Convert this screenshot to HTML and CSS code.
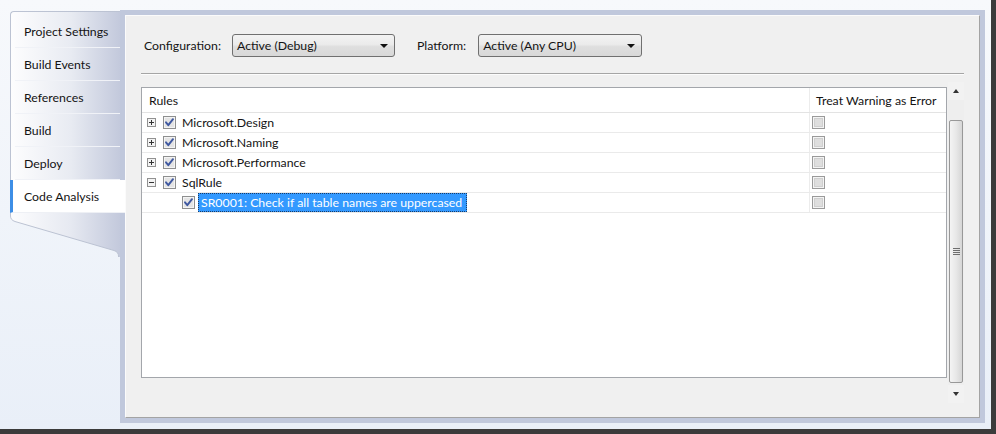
FILE: index.html
```html
<!DOCTYPE html>
<html>
<head>
<meta charset="utf-8">
<link rel="stylesheet" href="styles.css">
</head>
<body>
<svg class="defs" width="0" height="0">
  <defs>
    <linearGradient id="tailgrad" x1="0" x2="1" y1="0" y2="0">
      <stop offset="0" stop-color="#fdfdfe"/>
      <stop offset="0.55" stop-color="#e6e9f1"/>
      <stop offset="1" stop-color="#c3c9dc"/>
    </linearGradient>
    <symbol id="chk" viewBox="0 0 13 13">
      <rect x="0.5" y="0.5" width="12" height="12" fill="#f4f4f4" stroke="#8e8f8f"/>
      <rect x="1.5" y="1.5" width="10" height="10" fill="#e4e4e4" stroke="#f4f4f4"/>
      <path d="M3 6.3 L5.3 9.2 L10 3.2" fill="none" stroke="#3f58a0" stroke-width="1.9" stroke-linejoin="round" stroke-linecap="round"/>
    </symbol>
    <symbol id="unchk" viewBox="0 0 13 13">
      <rect x="0.5" y="0.5" width="12" height="12" fill="#f4f4f4" stroke="#9a9a9a"/>
      <rect x="2" y="2" width="9" height="9" fill="#dedede"/>
      <rect x="2.5" y="2.5" width="8" height="8" fill="none" stroke="#cfcfcf"/>
    </symbol>
    <symbol id="plus" viewBox="0 0 9 9">
      <rect x="0.5" y="0.5" width="8" height="8" fill="#f3f3f3" stroke="#919191"/>
      <path d="M2 4.5 H7 M4.5 2 V7" stroke="#333" stroke-width="1"/>
    </symbol>
    <symbol id="minus" viewBox="0 0 9 9">
      <rect x="0.5" y="0.5" width="8" height="8" fill="#f3f3f3" stroke="#919191"/>
      <path d="M2 4.5 H7" stroke="#333" stroke-width="1"/>
    </symbol>
  </defs>
</svg>
<div class="frame">
  <div class="window">
    <div class="side">
      <div class="tabs">
        <div class="tab">Project Settings</div>
        <div class="tab">Build Events</div>
        <div class="tab">References</div>
        <div class="tab">Build</div>
        <div class="tab">Deploy</div>
        <div class="tab active">Code Analysis</div>
      </div>
      <svg class="tail" width="110" height="44" viewBox="0 0 110 44">
        <path d="M0.5 0 V3 Q0.5 7 5 8.5 L104 37.5 Q108.5 39 108.5 43 V44 H110 V0 Z" fill="url(#tailgrad)"/>
        <path d="M0.5 0 V3 Q0.5 7 5 8.5 L104 37.5 Q108.5 39 108.5 43 V44" fill="none" stroke="#bcc3d3" stroke-width="1"/>
      </svg>
    </div>
    <div class="panel">
      <div class="inner">
        <div class="toolbar">
          <span class="label">Configuration:</span>
          <div class="combo combo-config"><span>Active (Debug)</span><i class="arrow"></i></div>
          <span class="label label-platform">Platform:</span>
          <div class="combo combo-platform"><span>Active (Any CPU)</span><i class="arrow"></i></div>
        </div>
        <div class="sep"></div>
        <div class="gridrow">
          <div class="grid">
            <div class="row head">
              <div class="c1">Rules</div>
              <div class="c2">Treat Warning as Error</div>
            </div>
            <div class="row">
              <div class="c1"><svg class="exp"><use href="#plus"/></svg><svg class="cb"><use href="#chk"/></svg><span class="txt">Microsoft.Design</span></div>
              <div class="c2"><svg class="cb"><use href="#unchk"/></svg></div>
            </div>
            <div class="row">
              <div class="c1"><svg class="exp"><use href="#plus"/></svg><svg class="cb"><use href="#chk"/></svg><span class="txt">Microsoft.Naming</span></div>
              <div class="c2"><svg class="cb"><use href="#unchk"/></svg></div>
            </div>
            <div class="row">
              <div class="c1"><svg class="exp"><use href="#plus"/></svg><svg class="cb"><use href="#chk"/></svg><span class="txt">Microsoft.Performance</span></div>
              <div class="c2"><svg class="cb"><use href="#unchk"/></svg></div>
            </div>
            <div class="row">
              <div class="c1"><svg class="exp"><use href="#minus"/></svg><svg class="cb"><use href="#chk"/></svg><span class="txt">SqlRule</span></div>
              <div class="c2"><svg class="cb"><use href="#unchk"/></svg></div>
            </div>
            <div class="row">
              <div class="c1 child"><svg class="cb"><use href="#chk"/></svg><span class="sel">SR0001: Check if all table names are uppercased</span></div>
              <div class="c2"><svg class="cb"><use href="#unchk"/></svg></div>
            </div>
          </div>
          <div class="scroll">
            <div class="btn"><i class="up"></i></div>
            <div class="track">
              <div class="thumb"><div class="grip"><b></b><b></b><b></b><b></b></div></div>
            </div>
            <div class="btn"><i class="down"></i></div>
          </div>
        </div>
      </div>
    </div>
  </div>
</div>
</body>
</html>
```

FILE: styles.css
```css
* { box-sizing: border-box; }
html, body { margin: 0; padding: 0; }
body {
  width: 996px;
  height: 434px;
  overflow: hidden;
  font-family: Lato, "Liberation Sans", sans-serif;
  font-size: 12.3px;
  color: #141414;
}
.defs { position: absolute; width: 0; height: 0; }

.frame {
  width: 996px;
  height: 434px;
  background: linear-gradient(#f7f9fc, #e9eff8);
  border-right: 5px solid #3b3b3b;
  border-bottom: 5px solid #3b3b3b;
  padding: 10px 0 0 10px;
}
.window {
  display: flex;
  align-items: flex-start;
}

/* Side tabs */
.side {
  width: 110px;
  display: flex;
  flex-direction: column;
  margin-top: 1px;
}
.tabs {
  background: linear-gradient(90deg, #fdfdfe 0%, #e8ebf2 55%, #c3c9dc 100%);
  border-top: 1px solid #bcc3d3;
  border-left: 1px solid #bcc3d3;
  border-top-left-radius: 4px;
  padding-top: 3px;
  display: flex;
  flex-direction: column;
}
.tab {
  height: 33px;
  margin-left: 4px;
  padding-left: 9px;
  line-height: 33px;
  border-bottom: 1px solid #f0f2f7;
  white-space: nowrap;
}
.tab.active {
  position: relative;
  z-index: 2;
  margin-left: -1px;
  margin-right: -5px;
  padding-left: 11px;
  background: #fff;
  border-left: 3px solid #3d8ee6;
  border-bottom: 1px solid #eef0f5;
  height: 33px;
}
.tail { display: block; }

/* Main panel */
.panel {
  width: 865px;
  height: 413px;
  background: #c0c8dc;
  padding: 5px;
}
.inner {
  height: 100%;
  background: #f0f0f0;
  border: 1px solid;
  border-color: #fbfbfb #a3a3a3 #a3a3a3 #fbfbfb;
  padding: 18px 15px 0 15px;
}
.toolbar {
  display: flex;
  align-items: center;
  height: 23px;
}
.label { margin-left: 3px; margin-right: 11px; }
.label-platform { margin-left: 22px; margin-right: 12px; }
.combo {
  height: 23px;
  border: 1px solid #707070;
  border-radius: 3px;
  background: linear-gradient(#f3f3f3, #ebebeb 45%, #dfdfdf 55%, #d8d8d8);
  display: flex;
  align-items: center;
  padding-left: 4px;
  padding-right: 6px;
  justify-content: space-between;
}
.combo-config { width: 163px; }
.combo-platform { width: 164px; }
.arrow {
  width: 0; height: 0;
  border-left: 4px solid transparent;
  border-right: 4px solid transparent;
  border-top: 4px solid #111;
}
.sep {
  margin-top: 16px;
  height: 2px;
  border-top: 1px solid #a5a5a5;
  border-bottom: 1px solid #fcfcfc;
}

.gridrow {
  margin-top: 12px;
  display: flex;
  align-items: flex-start;
}
.grid {
  width: 806px;
  height: 291px;
  background: #fff;
  border: 1px solid #a3a6ab;
}
.row {
  display: grid;
  grid-template-columns: 668px 136px;
  height: 20px;
  border-bottom: 1px solid #eaeaea;
}
.row.head {
  height: 25px;
  border-bottom: 1px solid #e3e3e3;
}
.c1, .c2 {
  display: flex;
  align-items: center;
  white-space: nowrap;
}
.c1 { border-right: 1px solid #ececec; padding-left: 5px; }
.head .c1 { padding-left: 7px; }
.head .c2 { padding-left: 6px; }
.c2 { padding-left: 2px; }
.c1.child { padding-left: 40px; }
.exp { width: 9px; height: 9px; margin-right: 7px; }
.cb { width: 13px; height: 13px; }
.txt { margin-left: 6px; }
.sel {
  margin-left: 3px;
  height: 19px;
  line-height: 17px;
  padding: 0 4px 0 2px;
  background: #3399ff;
  color: #fff;
  border: 1px dotted #1a3c66;
}

/* Scrollbar */
.scroll {
  width: 16px;
  height: 321px;
  margin-top: -5px;
  margin-left: 1px;
  display: flex;
  flex-direction: column;
  background: #eeeeee;
}
.btn {
  height: 18px;
  display: flex;
  align-items: center;
  justify-content: center;
  background: #f2f2f2;
}
.up, .down {
  width: 0; height: 0;
  border-left: 3.5px solid transparent;
  border-right: 3.5px solid transparent;
}
.up { border-bottom: 4px solid #333; }
.down { border-top: 4px solid #333; }
.track {
  flex: 1;
  padding: 20px 0 2px 0;
  display: flex;
  flex-direction: column;
}
.thumb {
  flex: 1;
  margin: 0 1px 0 1px;
  border: 1px solid #989898;
  border-radius: 2px;
  background: linear-gradient(90deg, #f4f4f4, #e8e8e8 50%, #d6d6d6);
  display: flex;
  align-items: center;
  justify-content: center;
}
.grip {
  display: flex;
  flex-direction: column;
  gap: 1px;
}
.grip b {
  display: block;
  width: 7px;
  height: 1px;
  background: #6e6e6e;
}
```
